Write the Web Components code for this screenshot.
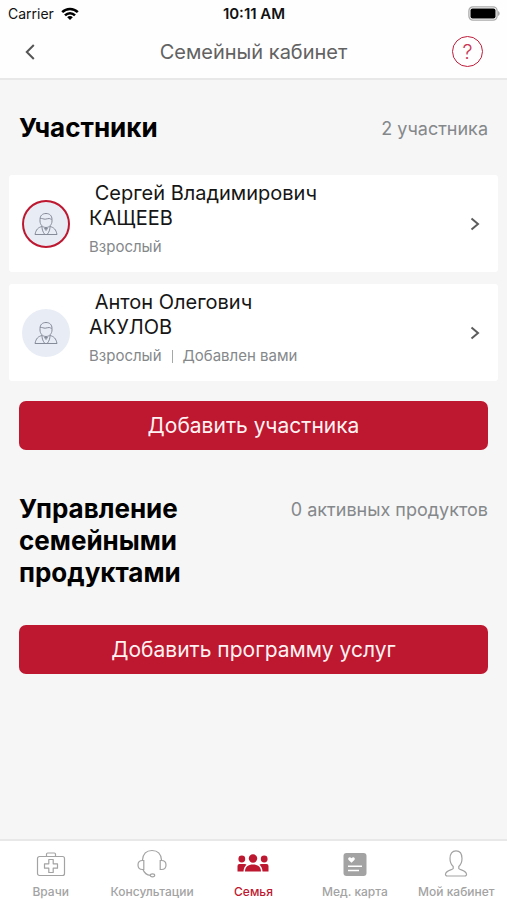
<!DOCTYPE html>
<html lang="ru">
<head>
<meta charset="utf-8">
<meta name="viewport" content="width=device-width, initial-scale=1">
<title>Семейный кабинет</title>
<style>
  :root { --brand: #be1730; --page: #f6f6f6; --muted: #85888b; --line: #e8e8e8; }
  html, body { margin: 0; min-height: 100%; }
  body { background: var(--page); color: #000; font-family: Inter, "Noto Sans", sans-serif; }
</style>
</head>
<body>
<family-app></family-app>

<script>
class BaseElement extends HTMLElement {
  connectedCallback() {
    if (this.shadowRoot) return;
    this.attachShadow({ mode: 'open' }).innerHTML =
      '<style>*{box-sizing:border-box}svg{display:block}</style>' + this.render();
  }
}

class StatusBar extends BaseElement {
  render() {
    return `<style>
      :host { display: grid; grid-template-columns: 1fr auto 1fr; align-items: center; height: 27px; padding: 0 7px 0 8px; font-size: 14px; line-height: 20px; color: #111; }
      .left { display: flex; align-items: center; gap: 7px; }
      .time { font-size: 15px; font-weight: 600; }
      .battery { justify-self: end; }
    </style>
    <span class="left"><span>Carrier</span>
      <svg width="18" height="14" viewBox="0 0 18 14" fill="none" stroke="#000" stroke-width="2.5"><path d="M1.2 5.2C5.5.8 12.500.8 16.800 5.2M4 8.300c2.800-2.900 7.200-2.900 10 0"/><path d="M9 13 6.200 10.200c1.500-1.500 4.100-1.500 5.600 0z" fill="#000" stroke="none"/></svg>
    </span>
    <span class="time">10:11 AM</span>
    <svg class="battery" width="32" height="15" viewBox="0 0 32 15"><rect x=".9" y=".9" width="28.200" height="13.200" rx="4" fill="#fff" stroke="#aaa" stroke-width="1.300"/><rect x="2.500" y="2.500" width="25" height="10" rx="2" fill="#000"/><path d="M30.200 5c1.800.7 1.800 4.300 0 5z" fill="#999"/></svg>`;
  }
}
customElements.define('status-bar', StatusBar);

class NavHeader extends BaseElement {
  render() {
    return `<style>
      :host { display: grid; grid-template-columns: 1fr auto 1fr; align-items: center; height: 53px; padding: 0 24px 2px; border-bottom: 2px solid var(--line); }
      h1 { margin: 0; font-size: 20px; line-height: 24px; font-weight: 400; color: #626262; }
      button { border: 0; background: none; padding: 0; font: inherit; cursor: pointer; }
      .help { display: grid; place-items: center; justify-self: end; width: 31px; height: 31px; border-radius: 50%; border: 1px solid #c01d3b; color: #ca3854; font-size: 20px; line-height: 24px; font-weight: 300; }
    </style>
    <button aria-label="Назад"><svg width="12" height="16" viewBox="0 0 12 16" fill="none" stroke="#555" stroke-width="2"><path d="M9.800 1 2.800 8l7 7"/></svg></button>
    <h1><slot></slot></h1>
    <button class="help" aria-label="Помощь">?</button>`;
  }
}
customElements.define('nav-header', NavHeader);

class SectionHead extends BaseElement {
  render() {
    return `<style>
      :host { display: flex; justify-content: space-between; gap: 24px; padding: 0 10px; }
      h2 { margin: 0; font-size: 26px; line-height: 32px; font-weight: 700; max-width: 200px; }
      ::slotted([slot=count]) { font-size: 18px; line-height: 34px; color: var(--muted); white-space: nowrap; }
    </style><h2><slot></slot></h2><slot name="count"></slot>`;
  }
}
customElements.define('section-head', SectionHead);

class MemberCard extends BaseElement {
  render() {
    return `<style>
      :host { display: block; }
      a { display: grid; grid-template-columns: 48px 1fr 12px; column-gap: 19px; align-items: center; min-height: 97px; padding: 0 17px 0 13px; background: #fff; border-radius: 3px; color: #161616; text-decoration: none; }
      .avatar { display: grid; place-items: center; width: 48px; height: 48px; border-radius: 50%; background: #e8ecf5; }
      :host([current]) .avatar { box-shadow: inset 0 0 0 2px var(--brand); }
      .info { align-self: start; padding-top: 6px; }
      .name { display: block; font-size: 20px; line-height: 25px; white-space: pre-line; }
      .meta { display: flex; align-items: center; gap: 10px; margin-top: 6px; font-size: 15px; line-height: 20px; color: var(--muted); }
      .meta span + span { display: flex; align-items: center; gap: 10px; }
      .meta span + span::before { content: ""; width: 1px; height: 13px; background: #a5a7a9; }
    </style>
    <a href="#member">
      <span class="avatar"><svg width="24" height="24" viewBox="0 0 24 24" fill="none" stroke="#858b99" stroke-width="1"><path d="M6 7.500C6 3.500 8.500 1.500 12 1.500s6 2 6 6V9c0 3.500-2.500 6.500-6 6.500S6 12.500 6 9zM6.200 6.500c2-.3 3.300.7 5 .7s2.500-.9 4-.7 1.500 1 2.700.8M8 14.500c-4 1-6 3-7 8h22c-1-5-3-7-7-8M8 14.500c0 3.500 1 5.500 2.800 8M16 14.500c0 3.500-1 5.500-2.800 8M10.500 16.500h3L12 18.500z"/></svg></span>
      <span class="info">
        <span class="name">&nbsp;${this.getAttribute('first')}\n${this.getAttribute('last')}</span>
        <span class="meta"><span>${this.getAttribute('age')}</span>${this.hasAttribute('note') ? `<span>${this.getAttribute('note')}</span>` : ''}</span>
      </span>
      <svg width="12" height="14" viewBox="0 0 12 14" fill="none" stroke="#5c5c5c" stroke-width="2"><path d="m2.500 1.500 6.500 5.500-6.500 5.500"/></svg>
    </a>`;
  }
}
customElements.define('member-card', MemberCard);

class PrimaryButton extends BaseElement {
  render() {
    return `<style>
      :host { display: block; padding: 0 10px; }
      button { display: block; width: 100%; height: 49px; padding: 0; border: 0; border-radius: 7px; background: var(--brand); color: #fff2f3; font: inherit; font-size: 21px; line-height: 28px; cursor: pointer; }
    </style><button><slot></slot></button>`;
  }
}
customElements.define('primary-button', PrimaryButton);

const TAB_ICONS = {
  doctors: '<path d="M3.500 7.500h23a2 2 0 0 1 2 2v15a2 2 0 0 1-2 2h-23a2 2 0 0 1-2-2v-15a2 2 0 0 1 2-2zM10.500 7.500V5.200q0-1.200 1.200-1.200h6.600q1.200 0 1.200 1.200v2.300M12.800 10.500h4.400v4.300h4.300v4.400h-4.300v4.300h-4.400v-4.300H8.500v-4.400h4.300z" stroke-linejoin="round"/>',
  consult: '<path d="M5.500 11C6 5 9.500 1.500 15 1.500S24 5 24.500 11M6.800 11.500v9H5.500c-2.700 0-4.500-1.800-4.500-4.500s1.800-4.500 4.500-4.500zM23.200 11.500v9h1.300c2.700 0 4.500-1.800 4.500-4.500s-1.800-4.500-4.500-4.500zM6 20.500c1.200 3.500 3.700 5.500 7.500 5.800"/><ellipse cx="15.500" cy="26.300" rx="2.200" ry="1.500"/>',
  family: '<g fill="currentColor" stroke="none"><circle cx="15" cy="9.500" r="4.200"/><circle cx="3.800" cy="10" r="3.400"/><circle cx="26.200" cy="10" r="3.400"/><path d="M7 22.500c0-4.500 3.200-7 8-7s8 2.500 8 7zM-.5 22.500V17q0-2 2-2h5q1.500 0 2 .8-2.700 2-3 6.700zM30.500 22.500V17q0-2-2-2h-5q-1.500 0-2 .8 2.700 2 3 6.700z"/></g>',
  card: '<rect x="3.500" y="4" width="23" height="23" rx="3" fill="currentColor" stroke="none"/><path d="M11.500 13.800 8.600 11c-1.500-1.600.9-4 2.900-1.800 2-2.200 4.400.2 2.900 1.800z" fill="#fff" stroke="none"/><path d="M8 17.200h14M8 21.500h11" stroke="#fff" stroke-width="1.600"/>',
  profile: '<path d="M12.200 17.500c-2.200-2-3.200-4.700-3.200-8C9 5 11.200 1.800 15 1.800S21 5 21 9.500c0 3.300-1 6-3.200 8v2c.5 1.500 7 1.700 7.700 5.500.2 1-.5 2-1.700 2H6.200c-1.200 0-1.900-1-1.700-2 .7-3.800 7.200-4 7.700-5.500z"/>'
};

class TabItem extends BaseElement {
  render() {
    return `<style>
      :host { display: block; color: #a3a3a3; }
      :host([active]) { color: var(--brand); }
      a { display: flex; flex-direction: column; align-items: center; gap: 5px; padding-top: 8px; color: inherit; text-decoration: none; font-size: 12px; line-height: 16px; font-weight: 500; white-space: nowrap; }
      svg { overflow: visible; }
    </style>
    <a href="#tab"><svg width="30" height="30" viewBox="0 0 30 30" fill="none" stroke="currentColor" stroke-width="1.200">${TAB_ICONS[this.getAttribute('icon')]}</svg><slot></slot></a>`;
  }
}
customElements.define('tab-item', TabItem);

class TabBar extends BaseElement {
  render() {
    return `<style>
      :host { display: block; }
      nav { display: grid; grid-template-columns: repeat(5, minmax(0, 1fr)); min-height: 61px; border-top: 2px solid var(--line); background: #fff; }
    </style><nav><slot></slot></nav>`;
  }
}
customElements.define('tab-bar', TabBar);

class FamilyApp extends BaseElement {
  render() {
    return `<style>
      :host { display: flex; flex-direction: column; min-height: 100vh; }
      header { background: #fefefe; }
      main { flex: 1; padding: 32px 9px 24px; }
      .members { display: grid; gap: 12px; margin: 29px 0 20px; }
      .products { margin: 43px 0 36px; }
    </style>
    <header><status-bar></status-bar><nav-header>Семейный кабинет</nav-header></header>
    <main>
      <section-head>Участники<span slot="count">2 участника</span></section-head>
      <div class="members">
        <member-card current first="Сергей Владимирович" last="КАЩЕЕВ" age="Взрослый"></member-card>
        <member-card first="Антон Олегович" last="АКУЛОВ" age="Взрослый" note="Добавлен вами"></member-card>
      </div>
      <primary-button>Добавить участника</primary-button>
      <section-head class="products">Управление семейными продуктами<span slot="count">0 активных продуктов</span></section-head>
      <primary-button>Добавить программу услуг</primary-button>
    </main>
    <tab-bar>
      <tab-item icon="doctors">Врачи</tab-item>
      <tab-item icon="consult">Консультации</tab-item>
      <tab-item icon="family" active>Семья</tab-item>
      <tab-item icon="card">Мед. карта</tab-item>
      <tab-item icon="profile">Мой кабинет</tab-item>
    </tab-bar>`;
  }
}
customElements.define('family-app', FamilyApp);
</script>
</body>
</html>
